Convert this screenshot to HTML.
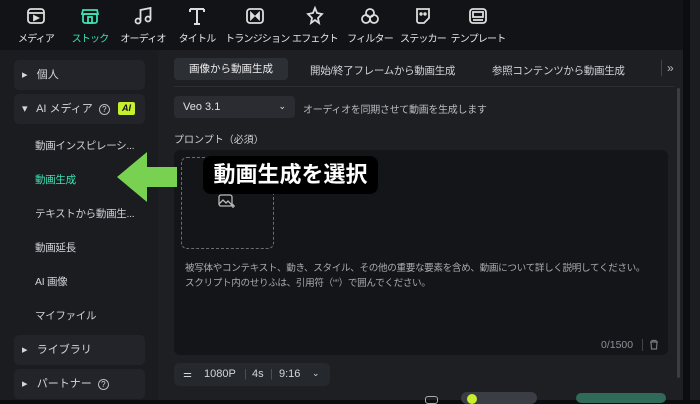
<!DOCTYPE html><html><head><meta charset="utf-8"><style>
*{margin:0;padding:0;box-sizing:border-box}
body{width:700px;height:400px;overflow:hidden;background:#0c0d0f;font-family:"Liberation Sans","Noto Sans CJK JP",sans-serif;color:#cfd2d6;position:relative}
.a{position:absolute}
.top{left:0;top:0;width:683px;height:50px;background:#111316}
.ti{top:6px;text-align:center;font-size:10px;color:#e6e6e6;width:60px;letter-spacing:-0.8px;white-space:nowrap}
.ti svg{display:block;margin:0 auto 4px}
.side{left:0;top:50px;width:158px;height:350px;background:#1a1c20}
.box{left:14px;width:131px;height:30px;background:#222429;border-radius:5px;font-size:11px;line-height:30px;padding-left:8px;color:#d4d6d9}
.sub{left:35px;font-size:10.5px;color:#cfd2d6;letter-spacing:-0.3px}
.main{left:158px;top:50px;width:525px;height:350px;background:#1d1f23}
</style></head><body>
<div class="a top"></div>
<div class="a ti" style="left:6px"><svg width="20" height="20" viewBox="0 0 20 20" fill="none" stroke="#ddd" stroke-width="1.8"><rect x="2" y="3" width="16" height="14" rx="3"/><line x1="2" y1="7" x2="18" y2="7"/><path d="M8 10l4 2-4 2z" fill="#ddd"/></svg>メディア</div>
<div class="a ti" style="left:60px;color:#3ee0b4"><svg width="20" height="20" viewBox="0 0 20 20" fill="none" stroke="#3ee0b4" stroke-width="1.8"><path d="M3 4h14l1 4H2z"/><rect x="3" y="8" width="14" height="9" rx="2"/><rect x="8" y="11" width="4" height="6"/></svg>ストック</div>
<div class="a ti" style="left:113px"><svg width="20" height="20" viewBox="0 0 20 20" fill="none" stroke="#ddd" stroke-width="1.8"><circle cx="5" cy="15" r="2.5"/><circle cx="15" cy="13" r="2.5"/><path d="M7.5 15V4l10-2v11"/></svg>オーディオ</div>
<div class="a ti" style="left:167px"><svg width="20" height="20" viewBox="0 0 20 20" fill="none" stroke="#ddd" stroke-width="2"><path d="M3 3h14M10 3v15M7 18h6M3 3v3M17 3v3"/></svg>タイトル</div>
<div class="a ti" style="left:225px"><svg width="20" height="20" viewBox="0 0 20 20" fill="none" stroke="#ddd" stroke-width="1.8"><rect x="2" y="3" width="16" height="14" rx="3"/><path d="M6 7l3 3-3 3zM14 7l-3 3 3 3z" fill="#ddd"/></svg>トランジション</div>
<div class="a ti" style="left:285px"><svg width="20" height="20" viewBox="0 0 20 20" fill="none" stroke="#ddd" stroke-width="1.8"><path d="M10 2l2 5 5 1-4 4 1 5-4-3-4 3 1-5-4-4 5-1z"/></svg>エフェクト</div>
<div class="a ti" style="left:340px"><svg width="20" height="20" viewBox="0 0 20 20" fill="none" stroke="#ddd" stroke-width="1.8"><circle cx="10" cy="7" r="4"/><circle cx="6" cy="13" r="4"/><circle cx="14" cy="13" r="4"/></svg>フィルター</div>
<div class="a ti" style="left:393px"><svg width="20" height="20" viewBox="0 0 20 20" fill="none" stroke="#ddd" stroke-width="1.8"><path d="M4 3h12v9l-5 5H6a2 2 0 0 1-2-2z"/><circle cx="8" cy="8" r=".8" fill="#ddd"/><circle cx="12" cy="8" r=".8" fill="#ddd"/></svg>ステッカー</div>
<div class="a ti" style="left:448px"><svg width="20" height="20" viewBox="0 0 20 20" fill="none" stroke="#ddd" stroke-width="1.8"><rect x="2" y="3" width="16" height="14" rx="3"/><rect x="5" y="6" width="10" height="5"/><line x1="5" y1="14" x2="15" y2="14"/></svg>テンプレート</div>
<div class="a" style="left:690px;top:0;width:10px;height:400px;background:#1a1c1f"></div>

<div class="a side"></div>
<div class="a box" style="top:60px">▸ &nbsp; 個人</div>
<div class="a box" style="top:94px">▾ &nbsp; AI メディア &nbsp;<span style="display:inline-block;width:11px;height:11px;border:1px solid #bbb;border-radius:50%;font-size:8px;line-height:9px;text-align:center;vertical-align:middle">?</span><span style="position:absolute;left:104px;top:8px;width:17px;height:13px;background:#c6f02e;color:#111;font-size:9px;font-weight:bold;font-style:italic;line-height:13px;text-align:center;border-radius:2px">AI</span></div>
<div class="a sub" style="top:138px">動画インスピレーシ...</div>
<div class="a sub" style="top:172px;color:#3ee0b4">動画生成</div>
<div class="a sub" style="top:206px">テキストから動画生...</div>
<div class="a sub" style="top:240px">動画延長</div>
<div class="a sub" style="top:274px">AI 画像</div>
<div class="a sub" style="top:308px">マイファイル</div>
<div class="a box" style="top:335px">▸ &nbsp; ライブラリ</div>
<div class="a box" style="top:369px">▸ &nbsp; パートナー &nbsp;<span style="display:inline-block;width:11px;height:11px;border:1px solid #bbb;border-radius:50%;font-size:8px;line-height:9px;text-align:center;vertical-align:middle">?</span></div>

<div class="a main"></div>
<div class="a" style="left:174px;top:58px;width:114px;height:22px;background:#2c2f34;border-radius:4px;font-size:10.5px;line-height:22px;text-align:center;color:#eee">画像から動画生成</div>
<div class="a" style="left:310px;top:63px;font-size:10.5px;color:#cfd2d6;letter-spacing:-0.3px">開始/終了フレームから動画生成</div>
<div class="a" style="left:492px;top:63px;font-size:10.5px;color:#cfd2d6;letter-spacing:-0.3px">参照コンテンツから動画生成</div>
<div class="a" style="left:661px;top:60px;width:1px;height:16px;background:#444"></div>
<div class="a" style="left:667px;top:61px;font-size:12px;color:#bbb">»</div>
<div class="a" style="left:174px;top:86px;width:500px;height:1px;background:#2b2e33"></div>
<div class="a" style="left:174px;top:96px;width:121px;height:22px;background:#2a2c31;border-radius:4px;font-size:11px;line-height:22px;padding-left:9px;color:#e0e0e0">Veo 3.1<span style="position:absolute;right:9px;top:-1px;font-size:9px">⌄</span></div>
<div class="a" style="left:303px;top:101px;font-size:10px;color:#b8bbbf;letter-spacing:-0.3px">オーディオを同期させて動画を生成します</div>
<div class="a" style="left:174px;top:131px;font-size:10px;color:#cfd2d6">プロンプト（必須）</div>
<div class="a" style="left:677px;top:88px;width:3px;height:290px;background:#3a3d42;border-radius:2px"></div>
<div class="a" style="left:174px;top:150px;width:494px;height:205px;background:#131518;border-radius:6px"></div>
<div class="a" style="left:181px;top:157px;width:93px;height:92px;border:1px dashed #6a6d72;border-radius:6px"></div>
<svg class="a" style="left:218px;top:193px" width="18" height="16" viewBox="0 0 18 16" fill="none" stroke="#bbb" stroke-width="1.3"><rect x="1" y="2" width="13" height="11" rx="2"/><path d="M1 11l4-4 3 3 2-2 4 4"/><path d="M15 11v4M13 13h4"/></svg>
<div class="a" style="left:185px;top:261px;font-size:9.6px;line-height:15px;color:#a9acb0;letter-spacing:-0.35px;white-space:nowrap">被写体やコンテキスト、動き、スタイル、その他の重要な要素を含め、動画について詳しく説明してください。<br>スクリプト内のせりふは、引用符（“”）で囲んでください。</div>
<div class="a" style="left:601px;top:339px;font-size:10.5px;color:#8d9095">0/1500</div>
<div class="a" style="left:642px;top:339px;width:1px;height:12px;background:#444"></div>
<svg class="a" style="left:649px;top:339px" width="10" height="11" viewBox="0 0 10 11" fill="none" stroke="#777" stroke-width="1.2"><path d="M1 3h8M3 3V1.5h4V3M2 3l.5 7h5L8 3"/></svg>
<div class="a" style="left:174px;top:363px;width:156px;height:23px;background:#25282c;border-radius:5px;font-size:11px;line-height:23px;color:#d4d6d9"><span style="position:absolute;left:9px;font-size:10px">⚌</span><span style="position:absolute;left:30px">1080P</span><span style="position:absolute;left:70px;color:#555">|</span><span style="position:absolute;left:78px">4s</span><span style="position:absolute;left:96px;color:#555">|</span><span style="position:absolute;left:105px">9:16</span><span style="position:absolute;left:138px;font-size:9px;top:-1px">⌄</span></div>
<div class="a" style="left:425px;top:396px;width:13px;height:8px;border:1px solid #aaa;border-radius:3px"></div>
<div class="a" style="left:461px;top:392px;width:76px;height:12px;background:#3a3e44;border-radius:8px"></div>
<div class="a" style="left:467px;top:394px;width:10px;height:10px;background:#c6f02e;border-radius:50%"></div>
<div class="a" style="left:576px;top:393px;width:90px;height:10px;background:#2f6b58;border-radius:5px"></div>

<svg class="a" style="left:115px;top:150px" width="65" height="52" viewBox="0 0 65 52"><path d="M2 27L32 2V17H62V37H32V52Z" fill="#79d152"/></svg>
<div class="a" style="left:203px;top:156px;width:175px;height:38px;background:#000;border-radius:8px;color:#fff;font-size:22px;font-weight:bold;line-height:38px;text-align:center">動画生成を選択</div>
</body></html>
